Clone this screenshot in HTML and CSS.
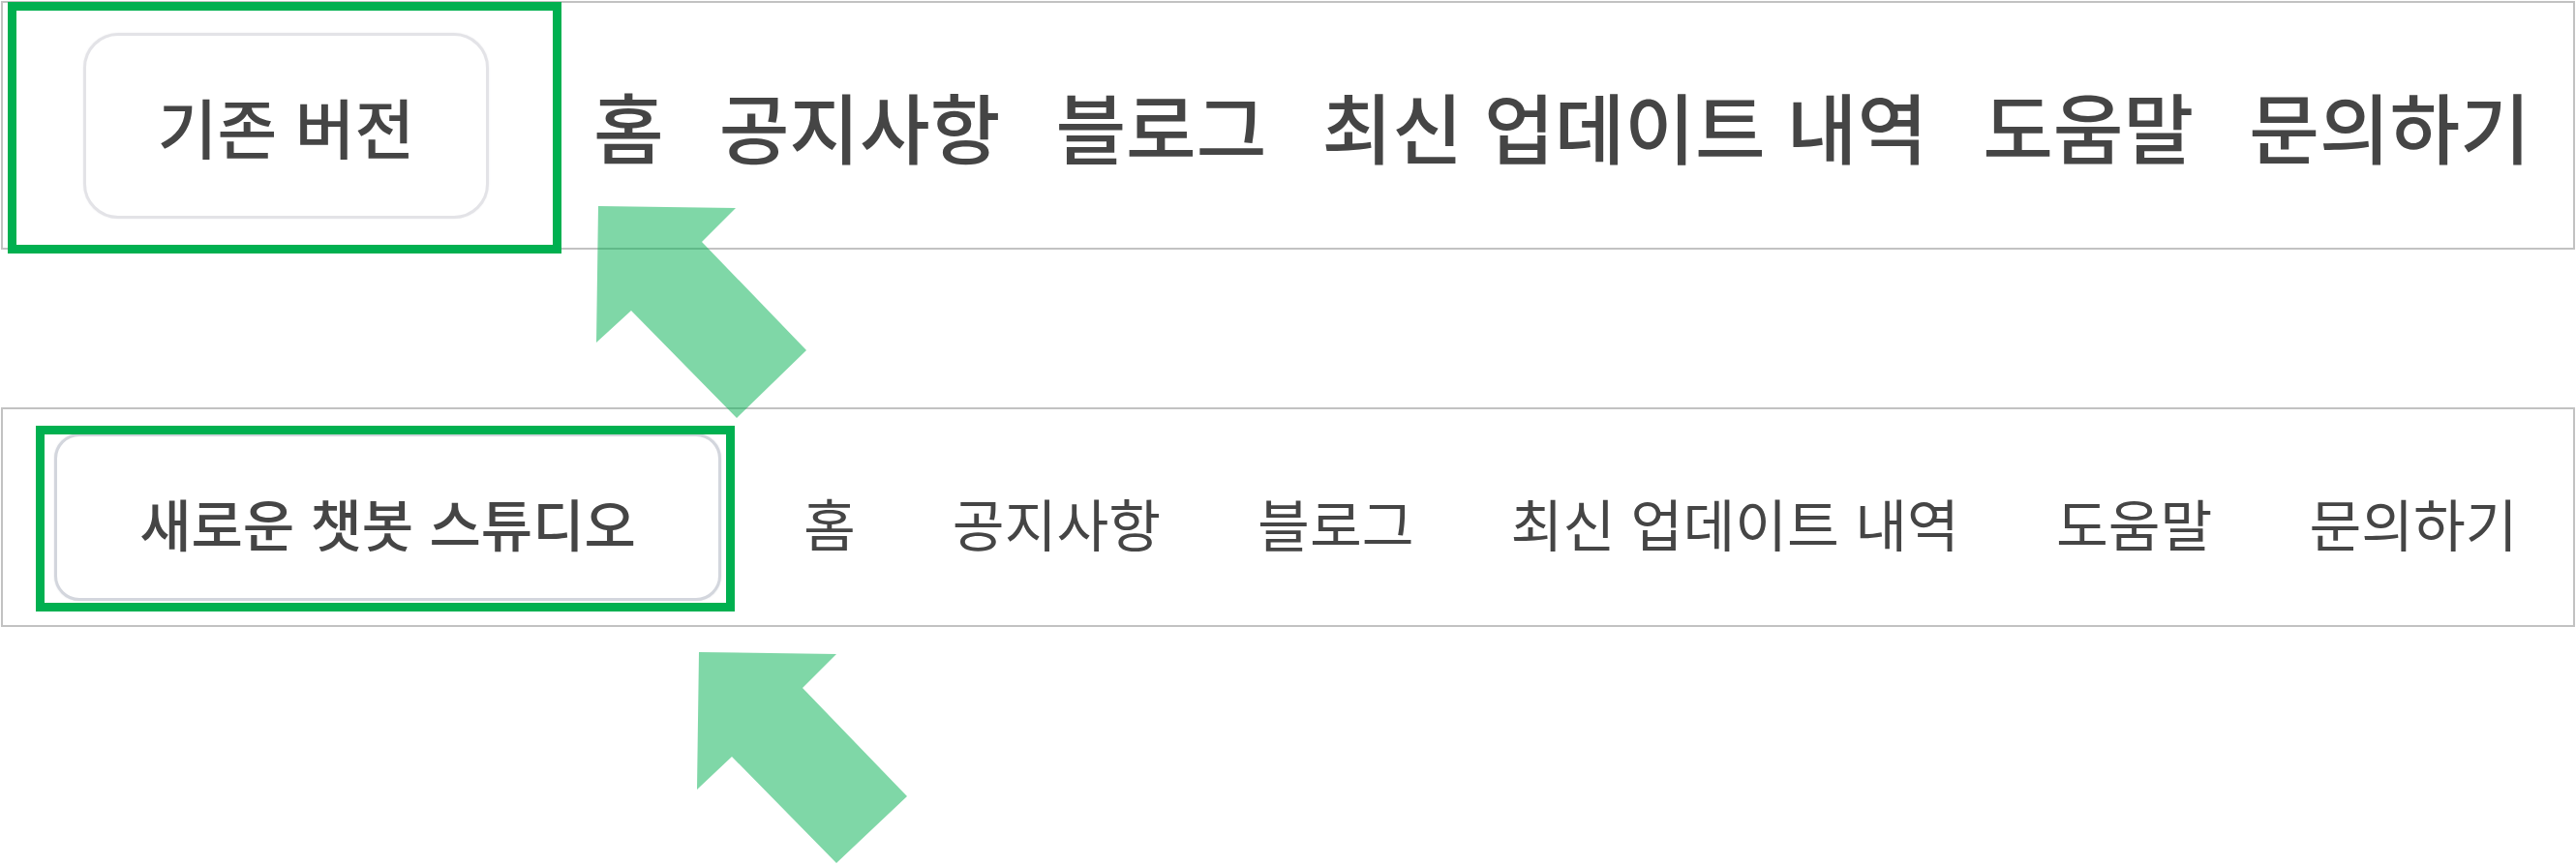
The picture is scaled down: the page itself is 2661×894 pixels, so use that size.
FILE: index.html
```html
<!DOCTYPE html>
<html lang="ko">
<head>
<meta charset="utf-8">
<title>버전 비교</title>
<link rel="stylesheet" href="styles.css">
</head>
<body>
<main class="page">
  <header class="bar bar-old">
    <button class="version-btn">기존 버전</button>
    <nav class="menu">
      <a>홈</a>
      <a>공지사항</a>
      <a>블로그</a>
      <a>최신 업데이트 내역</a>
      <a>도움말</a>
      <a>문의하기</a>
    </nav>
  </header>
  <header class="bar bar-new">
    <button class="version-btn">새로운 챗봇 스튜디오</button>
    <nav class="menu">
      <a>홈</a>
      <a>공지사항</a>
      <a>블로그</a>
      <a>최신 업데이트 내역</a>
      <a>도움말</a>
      <a>문의하기</a>
    </nav>
  </header>
  <svg class="annot" width="2661" height="894" viewBox="0 0 2661 894" aria-hidden="true">
    <rect class="hl" x="12.5" y="6.5" width="563" height="251"/>
    <rect class="hl" x="41.5" y="444.5" width="713" height="183"/>
    <polygon class="arrow" points="618,213 760,215 725,250 833,362 761,432 652,321 616,354"/>
    <polygon class="arrow" points="722,674 864,676 829,711 937,823 864,892 756,782 720,816"/>
  </svg>
</main>
</body>
</html>
```
FILE: styles.css
```css
* { box-sizing: border-box; }
html, body { margin: 0; padding: 0; background: #ffffff; }
body {
  font-family: "Noto Sans CJK KR", "Noto Sans", sans-serif;
  color: #454545;
}
.page {
  position: relative;
  width: 2661px;
  height: 894px;
  padding: 1px 0 0 1px;
  overflow: hidden;
}
.bar {
  display: flex;
  align-items: center;
  width: 2659px;
  border: 2px solid #c2c2c2;
  background: #fff;
}
.bar-old {
  height: 257px;
  padding-left: 83px;
}
.bar-new {
  height: 227px;
  margin-top: 163px;
  padding-left: 53px;
}
.version-btn {
  flex: none;
  display: flex;
  align-items: center;
  justify-content: center;
  background: #fff;
  font-family: inherit;
  color: #454545;
  line-height: 1;
  padding: 0;
}
.bar-old .version-btn {
  width: 419px;
  height: 192px;
  border: 3px solid #e3e3e7;
  border-radius: 36px;
  box-shadow: 0 0 2px #ececef;
  font-size: 67px;
  font-weight: 500;
}
.bar-new .version-btn {
  width: 689px;
  height: 173px;
  border: 3px solid #d3d6dd;
  border-radius: 26px;
  box-shadow: 0 0 2px #dfe1e6;
  font-size: 58px;
  font-weight: 500;
  padding-top: 10px;
}
.menu {
  display: flex;
  align-items: center;
  line-height: 1;
  white-space: nowrap;
}
.menu a { color: #454545; text-decoration: none; }
.bar-old .menu {
  margin-left: 108px;
  gap: 57px;
  font-size: 79px;
  font-weight: 500;
}
.bar-new .menu {
  margin-left: 85px;
  gap: 100px;
  font-size: 58.5px;
  font-weight: 400;
  padding-top: 12px;
}
.annot {
  position: absolute;
  left: 0;
  top: 0;
  pointer-events: none;
}
.hl {
  fill: none;
  stroke: #00b050;
  stroke-width: 9;
}
.arrow {
  fill: #00b050;
  fill-opacity: 0.5;
}
```
